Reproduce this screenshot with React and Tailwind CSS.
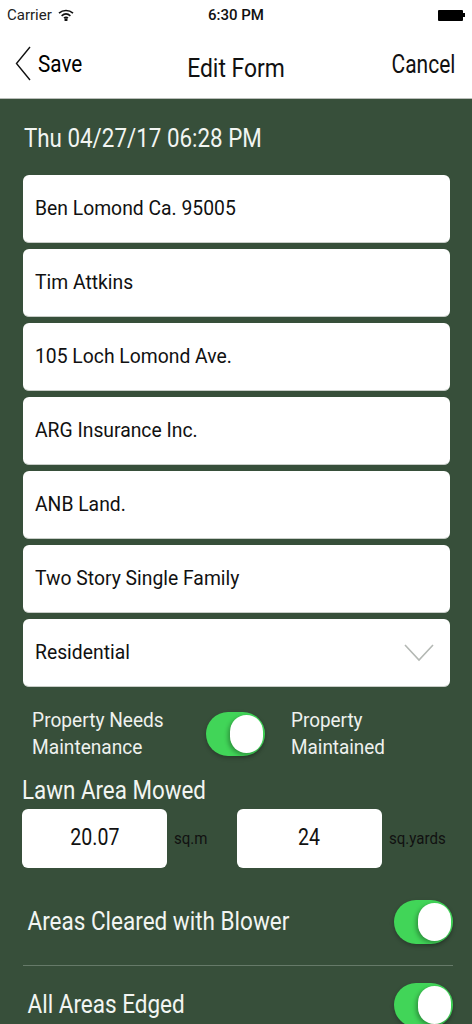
const fields = [
  'Ben Lomond Ca. 95005',
  'Tim Attkins',
  '105 Loch Lomond Ave.',
  'ARG Insurance Inc.',
  'ANB Land.',
  'Two Story Single Family',
];

const Toggle = () => (
  <div className="relative w-[59px] h-[44px] shrink-0 rounded-full bg-[#41d558] shadow-[0_2px_4px_rgba(0,0,0,0.25)]">
    <div className="absolute right-[2px] top-[3px] w-[33px] h-[38px] rounded-full bg-white shadow-[-2px_2px_4px_rgba(0,0,0,0.3)]" />
  </div>
);

const Card = ({ children }) => (
  <div className="h-[68px] flex items-center justify-between pt-[1px] pl-[12px] pr-[16px] bg-white rounded-[6px] border-b border-[#c8cdc8] text-[21px] text-[#111]">
    {children}
  </div>
);

const AreaInput = ({ value, unit, className }) => (
  <div className={`flex items-center ${className}`}>
    <div className="w-[145px] h-[59px] flex items-center justify-center bg-white rounded-[6px] text-[23px] text-[#111]">
      <span className="inline-block scale-x-[0.85]">{value}</span>
    </div>
    <span className="ml-[7px] inline-block origin-left scale-x-[0.94] text-[16px] text-[#111]">{unit}</span>
  </div>
);

export default function App() {
  return (
    <div className="w-[472px] h-[1024px] overflow-hidden bg-[#374f3a] font-['Roboto',sans-serif]">
      {/* Status bar + nav */}
      <div className="h-[99px] bg-white border-b border-[#b9bdb9] text-black">
        <div className="h-[30px] flex items-center justify-between pl-[7px] pr-[7px] text-[15px]">
          <div className="flex items-center gap-[6px] w-[150px]">
            <span className="text-[#222]">Carrier</span>
            <svg width="16" height="12" viewBox="0 0 16 12" fill="none" stroke="#111" strokeWidth="1.6">
              <path d="M1 4.2C5 .6 11 .6 15 4.2" />
              <path d="M3.6 6.8C6.2 4.6 9.8 4.6 12.4 6.8" />
              <path d="M6 9.2C7.2 8.2 8.8 8.2 10 9.2" />
              <circle cx="8" cy="10.8" r="0.8" fill="#111" />
            </svg>
          </div>
          <span className="font-medium text-[#111]">6:30 PM</span>
          <div className="w-[150px] flex justify-end items-center">
            <div className="w-[25px] h-[11px] bg-black rounded-[1px]" />
            <div className="w-[1.5px] h-[4px] bg-black" />
          </div>
        </div>
        <div className="relative h-[68px] flex justify-between px-[15px]">
          <div className="flex items-start pt-[16px] gap-[7px]">
            <svg width="16" height="36" viewBox="0 0 16 36" fill="none" stroke="#111" strokeWidth="1.4">
              <path d="M15 1 L1.5 17.5 L15 34" />
            </svg>
            <span className="inline-block origin-left scale-x-[0.9] text-[23px] leading-[36px] pt-[1px]">Save</span>
          </div>
          <span className="absolute left-0 right-0 top-[22px] text-center text-[26px] leading-[32px] text-[#111] scale-x-[0.88]">Edit Form</span>
          <span className="inline-block origin-right scale-x-[0.84] text-[25px] leading-[36px] pt-[17px] pr-[2px] text-[#111]">Cancel</span>
        </div>
      </div>

      {/* Form */}
      <div className="pt-[24px] px-[23px] text-white">
        <div className="origin-left scale-x-[0.895] text-[25px] leading-[32px] pl-[1px] text-[#f2f5f2]">Thu 04/27/17 06:28 PM</div>
        <div className="mt-[20px] flex flex-col gap-[6px] w-[427px]">
          {fields.map((f) => (
            <Card key={f}>
              <span className="inline-block origin-left scale-x-[0.92]">{f}</span>
            </Card>
          ))}
          <Card>
            <span className="inline-block origin-left scale-x-[0.92]">Residential</span>
            <svg width="30" height="20" viewBox="0 0 30 20" fill="none" stroke="#b4b8b4" strokeWidth="1.6">
              <path d="M1 2 L15 17 L29 2" />
            </svg>
          </Card>
        </div>

        {/* Maintenance switch */}
        <div className="mt-[20px] h-[54px] flex items-center text-[21px] leading-[27px] text-[#eef1ee]">
          <div className="w-[183px] pl-[10px] origin-left scale-x-[0.91]">Property Needs<br />Maintenance</div>
          <Toggle />
          <div className="ml-[26px] origin-left scale-x-[0.9]">Property<br />Maintained</div>
        </div>

        <div className="mt-[13px] -ml-[1px] origin-left scale-x-[0.86] text-[26px] leading-[32px] text-[#f2f5f2]">Lawn Area Mowed</div>
        <div className="mt-[3px] -ml-[1px] flex">
          <AreaInput value="20.07" unit="sq.m" className="w-[217px]" />
          <AreaInput value="24" unit="sq.yards" />
        </div>

        {/* Checks */}
        <div className="mt-[33px] w-[430px]">
          <div className="h-[65px] pb-[22px] flex items-center justify-between border-b border-[#667a69] text-[25px] text-[#f2f5f2]">
            <span className="pl-[5px] inline-block origin-left scale-x-[0.9]">Areas Cleared with Blower</span>
            <Toggle />
          </div>
          <div className="mt-[17px] flex items-center justify-between text-[25px] text-[#f2f5f2]">
            <span className="pl-[5px] inline-block origin-left scale-x-[0.9]">All Areas Edged</span>
            <Toggle />
          </div>
        </div>
      </div>
    </div>
  );
}
